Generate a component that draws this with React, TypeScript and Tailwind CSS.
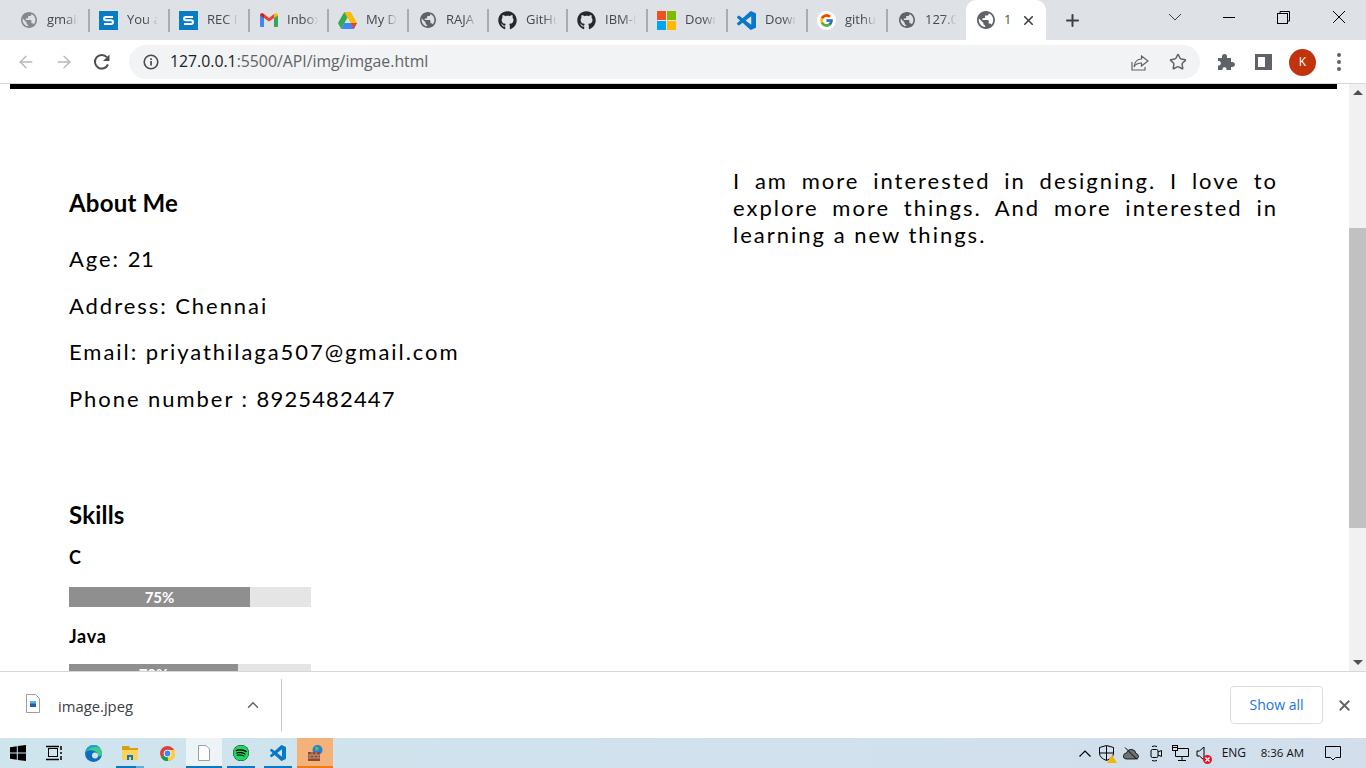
import { FaGithub, FaSpotify } from "react-icons/fa";
import { FcGoogle } from "react-icons/fc";
import { ArrowLeft, ArrowRight, Star, X, Plus, ChevronUp } from "lucide-react";
import type { ReactNode } from "react";

const Globe = ({ size = 16, color = "#5f6368" }: { size?: number; color?: string }) => (
  <svg width={size} height={size} viewBox="2 2 20 20" fill={color}>
    <path d="M12 2C6.48 2 2 6.48 2 12s4.48 10 10 10 10-4.48 10-10S17.52 2 12 2zm-1 17.93c-3.95-.49-7-3.85-7-7.93 0-.62.08-1.21.21-1.79L9 15v1c0 1.1.9 2 2 2v1.93zm6.9-2.54c-.26-.81-1-1.39-1.9-1.39h-1v-3c0-.55-.45-1-1-1H8v-2h2c.55 0 1-.45 1-1V7h2c1.1 0 2-.9 2-2v-.41c2.93 1.19 5 4.06 5 7.41 0 2.08-.8 3.97-2.1 5.39z" />
  </svg>
);
const SLogo = () => (
  <svg width="19" height="19" viewBox="0 0 19 19">
    <rect width="19" height="19" fill="#0a7cc4" />
    <path d="M14 6 H7 Q5 6 5 7.5 Q5 9.2 7 9.2 H12 Q14 9.2 14 11 Q14 13 12 13 H5" fill="none" stroke="#fff" strokeWidth="2" />
  </svg>
);
const Gmail = () => (
  <svg width="18" height="14" viewBox="0 0 18 14">
    <path d="M0 2 L4 4 V14 H1 Q0 14 0 13Z" fill="#4285f4" />
    <path d="M18 2 L14 4 V14 H17 Q18 14 18 13Z" fill="#34a853" />
    <path d="M4 5 L9 8.5 L14 5 V1 L9 5 L4 1Z" fill="#ea4335" />
    <path d="M0 2.5 Q0 0 2 0 L4 1 V5 Z" fill="#c5221f" />
    <path d="M18 2.5 Q18 0 16 0 L14 1 V5 Z" fill="#fbbc04" />
  </svg>
);
const Drive = () => (
  <svg width="19" height="17" viewBox="0 0 19 17">
    <path d="M6.3 0 H12.7 L19 11 H12.7Z" fill="#fbbc04" />
    <path d="M6.3 0 L0 11 L3.2 17 L9.5 5.6Z" fill="#34a853" />
    <path d="M3.2 17 H15.8 L19 11 H6.3Z" fill="#4285f4" />
    <path d="M15.8 17 L19 11 H12.7Z" fill="#ea4335" />
  </svg>
);
const Ms = () => (
  <svg width="19" height="19" viewBox="0 0 19 19">
    <rect width="9" height="9" fill="#f25022" />
    <rect x="10" width="9" height="9" fill="#7fba00" />
    <rect y="10" width="9" height="9" fill="#00a4ef" />
    <rect x="10" y="10" width="9" height="9" fill="#ffb900" />
  </svg>
);
const Vs = ({ size = 19 }: { size?: number }) => (
  <svg width={size} height={size} viewBox="0 0 24 24" fill="#0a78c8">
    <path d="M23.15 2.587L18.21.21a1.494 1.494 0 0 0-1.705.29l-9.46 8.63-4.12-3.128a.999.999 0 0 0-1.276.057L.327 7.261A1 1 0 0 0 .326 8.74L3.899 12 .326 15.26a1 1 0 0 0 .001 1.479L1.65 17.94a.999.999 0 0 0 1.276.057l4.12-3.128 9.46 8.63a1.492 1.492 0 0 0 1.704.29l4.942-2.377A1.5 1.5 0 0 0 24 20.06V3.939a1.5 1.5 0 0 0-.85-1.352zm-5.146 14.861L10.826 12l7.178-5.448v10.896z" />
  </svg>
);
const G = () => (
  <span className="flex h-[19px] w-[19px] items-center justify-center rounded-full bg-white">
    <FcGoogle size={15} />
  </span>
);
const Gh = () => <FaGithub size={19} color="#24292f" />;

const tabs = [
  { icon: <Globe color="#86888b" />, label: "gmail", w: "w-[80px]" },
  { icon: <SLogo />, label: "You a", w: "w-[80px]" },
  { icon: <SLogo />, label: "REC I", w: "w-[80px]" },
  { icon: <Gmail />, label: "Inbox", w: "w-[79px]" },
  { icon: <Drive />, label: "My D", w: "w-[80px]" },
  { icon: <Globe />, label: "RAJA", w: "w-[80px]" },
  { icon: <Gh />, label: "GitHu", w: "w-[79px]" },
  { icon: <Gh />, label: "IBM-I", w: "w-[80px]" },
  { icon: <Ms />, label: "Down", w: "w-[80px]" },
  { icon: <Vs />, label: "Down", w: "w-[80px]" },
  { icon: <G />, label: "githu", w: "w-[80px]" },
  { icon: <Globe />, label: "127.0", w: "w-[78px]" },
];

function TabStrip() {
  return (
    <div className="flex h-10 shrink-0 items-start bg-[#dee1e6] pl-[10px]">
      {tabs.map((t, i) => (
        <div key={i} className={`${t.w} relative flex h-10 shrink-0 items-center pl-[9px]`}>
          <span className="flex w-[19px] shrink-0 items-center justify-center">{t.icon}</span>
          <span className="ml-[9px] w-[33px] overflow-hidden whitespace-nowrap text-[13px] text-[#45494e] [mask-image:linear-gradient(to_right,black_55%,transparent_95%)]">
            {t.label}
          </span>
          {i < 11 && <span className="absolute right-0 top-[9px] h-[23px] w-[2px] bg-[#a9acb0]" />}
        </div>
      ))}
      <div className="flex h-10 w-[80px] shrink-0 items-center rounded-t-[10px] bg-white pl-[11px]">
        <Globe size={18} />
        <span className="ml-[9px] text-[13px] text-[#6b4a30]">1</span>
        <X size={15} strokeWidth={2.5} className="ml-[10px] text-[#3c4043]" />
      </div>
      <div className="flex h-10 w-[52px] items-center justify-center">
        <Plus size={19} strokeWidth={2.5} className="text-[#3c4043]" />
      </div>
      <div className="flex h-10 flex-1 items-start justify-end">
        <svg width="14" height="8" viewBox="0 0 14 8" fill="none" stroke="#3c4043" className="mr-[19px] mt-[13px]"><path d="M1 1 L7 7 L13 1" /></svg>
        <div className="flex w-[55px] justify-center pt-[17px]"><span className="h-px w-[12px] bg-black" /></div>
        <div className="flex w-[55px] justify-center pt-[11px]">
          <svg width="13" height="13" viewBox="0 0 13 13" fill="none" stroke="#000" strokeWidth="1">
            <rect x="0.5" y="2.5" width="10" height="10" />
            <path d="M3 2.5 V0.5 H12.5 V10 H10.5" />
          </svg>
        </div>
        <div className="flex w-[55px] justify-center pt-[10px]">
          <svg width="14" height="14" viewBox="0 0 14 14" stroke="#000" strokeWidth="1"><path d="M1 1 L13 13 M13 1 L1 13" /></svg>
        </div>
      </div>
    </div>
  );
}

function Toolbar() {
  return (
    <div className="flex h-[44px] shrink-0 items-center border-b border-[#d5d7da] bg-white pt-[1px]">
      <div className="flex w-[129px] items-center pl-[16px] text-[#b5b7ba]">
        <ArrowLeft size={20} strokeWidth={1.6} />
        <ArrowRight size={20} strokeWidth={1.6} className="ml-[18px]" />
        <svg width="18" height="18" viewBox="0 0 18 18" fill="none" className="ml-[19px]">
          <path d="M15 11.5 A6.8 6.8 0 1 1 13.8 4.2" stroke="#4a4d51" strokeWidth="2" />
          <path d="M16.5 1.5 V8 H10Z" fill="#4a4d51" />
        </svg>
      </div>
      <div className="flex h-[34px] w-[1071px] items-center rounded-full bg-[#f1f3f4] pl-[14px]">
        <svg width="16" height="16" viewBox="0 0 16 16" fill="none">
          <circle cx="8" cy="8" r="6.8" stroke="#4a4d51" strokeWidth="1.6" />
          <rect x="7.2" y="7" width="1.7" height="4.5" fill="#4a4d51" />
          <rect x="7.2" y="4.3" width="1.7" height="1.7" fill="#4a4d51" />
        </svg>
        <span className="ml-[11px] whitespace-nowrap text-[15.8px] text-[#5f6368]">
          <span className="text-[#202124]">127.0.0.1</span>:5500/API/img/imgae.html
        </span>
        <span className="ml-auto flex items-center pr-[13px]">
          <svg width="18" height="17" viewBox="0 0 18 17" fill="none" stroke="#5f6368" strokeWidth="1.2">
            <path d="M1 8 V16 H14 V13" />
            <path d="M10.5 2 L17 7 L10.5 12 V9 Q5 9 3 13 Q4 5 10.5 5Z" />
          </svg>
          <Star size={18} strokeWidth={2} className="ml-[20px] text-[#5f6368]" />
        </span>
      </div>
      <div className="flex flex-1 items-center">
        <svg width="18" height="18" viewBox="0 0 18 18" fill="#5f6368" className="ml-[17px]">
          <path d="M1 5 H5 V3.5 A2.5 2.5 0 0 1 10 3.5 V5 H14 V9 H15.5 A2.5 2.5 0 0 1 15.5 14 H14 V17 H9.5 V15.5 A2.2 2.2 0 0 0 5.5 15.5 V17 H1 V12.5 H2.5 A2.5 2.5 0 0 0 2.5 8 H1Z" />
        </svg>
        <span className="ml-[20px] flex h-[16px] w-[17px] justify-end border-[3px] border-[#5f6368] border-r-[7px]" />
        <span className="ml-[17px] flex h-[27px] w-[27px] items-center justify-center rounded-full bg-[#c2330b] text-[12px] text-white">K</span>
        <span className="ml-[21px] flex flex-col gap-[3px]">
          <i className="h-[4px] w-[4px] rounded-full bg-[#5f6368]" />
          <i className="h-[4px] w-[4px] rounded-full bg-[#5f6368]" />
          <i className="h-[4px] w-[4px] rounded-full bg-[#5f6368]" />
        </span>
      </div>
    </div>
  );
}

function Bar({ fill, label }: { fill: string; label: string }) {
  return (
    <div className="h-5 w-[242px] bg-[#e5e5e5]">
      <div className={`${fill} h-5 bg-[#8f8f90] text-center text-[15px] font-bold leading-5 text-white`}>{label}</div>
    </div>
  );
}

function Page() {
  return (
    <div className="flex min-h-0 flex-1 bg-white">
      <main className="min-w-0 flex-1 overflow-hidden pl-[10px] pr-[12px] font-['Lato',sans-serif] text-black">
        <div className="h-[5px] bg-black" />
        <div className="flex">
          <section className="w-[723px] shrink-0 pl-[59px] pt-[99px]">
            <h2 className="text-[24px] font-bold leading-[30px] tracking-[0.2px]">About Me</h2>
            <div className="mt-[28px] flex flex-col gap-[20px] text-[22px] leading-[26.7px] tracking-[1.95px]">
              <p>Age: <span className="tracking-[0.5px]">21</span></p>
              <p>Address: Chennai</p>
              <p>Email: priyathilaga507@gmail.com</p>
              <p>Phone number : <span className="tracking-[1.15px]">8925482447</span></p>
            </div>
            <h2 className="mt-[87px] text-[24px] font-bold leading-[30px] tracking-[0.2px]">Skills</h2>
            <p className="mt-[16px] text-[18px] font-bold leading-[22px] tracking-[0.7px]">C</p>
            <div className="mt-[19px]"><Bar fill="w-[181px]" label="75%" /></div>
            <p className="mt-[18px] text-[18px] font-bold leading-[22px] tracking-[0.7px]">Java</p>
            <div className="mt-[17px]"><Bar fill="w-[169px]" label="70%" /></div>
          </section>
          <section className="w-[545px] shrink-0 pt-[78px] text-justify text-[22px] leading-[27px] tracking-[2px]">
            I am more interested in designing. I love to explore more things. And more interested in learning a new things.
          </section>
        </div>
      </main>
      <aside className="flex w-[17px] shrink-0 flex-col bg-[#f1f1f1]">
        <div className="flex h-[17px] items-center justify-center">
          <span className="h-0 w-0 border-x-[5px] border-b-[5px] border-x-transparent border-b-[#505050]" />
        </div>
        <div className="mt-[127px] h-[300px] bg-[#c1c1c1]" />
        <div className="mt-auto flex h-[17px] items-center justify-center">
          <span className="h-0 w-0 border-x-[5px] border-t-[5px] border-x-transparent border-t-[#505050]" />
        </div>
      </aside>
    </div>
  );
}

function Downloads() {
  return (
    <div className="flex h-[67px] shrink-0 items-center border-t border-[#d5d7da] bg-white">
      <div className="flex h-[52px] w-[282px] items-center border-r border-[#c4c6c8] pl-[26px]">
        <svg width="14" height="19" viewBox="0 0 14 19" className="mb-[4px]">
          <path d="M0.5 0.5 H9.5 L13.5 4.5 V18.5 H0.5Z" fill="#fff" stroke="#9aa0a6" />
          <rect x="4" y="7" width="6" height="6" fill="#1a5fb4" />
          <rect x="4" y="7" width="6" height="2.5" fill="#5db3ee" />
        </svg>
        <span className="ml-[18px] pt-[2px] text-[14.8px] text-[#3c4043]">image.jpeg</span>
        <ChevronUp size={18} strokeWidth={2} className="ml-auto mr-[19px] text-[#5f6368]" />
      </div>
      <div className="ml-auto flex h-[38px] w-[93px] items-center justify-center rounded-[4px] border border-[#dadce0] pb-[2px] text-[14px] text-[#1a73e8]">
        Show all
      </div>
      <X size={17} strokeWidth={2.5} className="ml-[13px] mr-[13px] text-[#5f6368]" />
    </div>
  );
}

function TaskSlot({ w, ml, line, bg, children }: { w: string; ml: string; line?: string; bg?: string; children: ReactNode }) {
  return (
    <div className={`${w} ${ml} ${bg ?? ""} relative flex h-[30px] shrink-0 items-center justify-center`}>
      {children}
      {line && <span className={`${line} absolute bottom-0 left-0 right-0 h-[2px]`} />}
    </div>
  );
}

function Taskbar() {
  return (
    <div className="flex h-[30px] shrink-0 items-center bg-gradient-to-r from-[#cfe5ee] to-[#d2deec]">
      <TaskSlot w="w-[36px]" ml="ml-0">
        <svg width="16" height="16" viewBox="0 0 16 16" fill="#000"><path d="M0 2.2 L6.8 1.2 V7.5 H0Z M7.8 1 L16 0 V7.5 H7.8Z M0 8.5 H6.8 V14.8 L0 13.8Z M7.8 8.5 H16 V16 L7.8 15Z" /></svg>
      </TaskSlot>
      <TaskSlot w="w-[36px]" ml="ml-0">
        <svg width="17" height="16" viewBox="0 0 17 16" fill="none" stroke="#000"><rect x="2.5" y="3.5" width="9" height="8" /><path d="M0 1.5 H13 M0 14.5 H13 M15 1 V5 M15 7 V9 M15 11 V15" strokeWidth="1.5" /></svg>
      </TaskSlot>
      <TaskSlot w="w-[36px]" ml="ml-[3px]">
        <svg width="17" height="17" viewBox="0 0 17 17">
          <circle cx="8.5" cy="8.5" r="8.5" fill="#0f6cbd" />
          <path d="M0.5 7 Q3 0 9 0 Q16 0.5 17 8 Q17 11.5 12.5 11.5 Q13.5 8 10.5 6.5 Q4 4 0.5 7Z" fill="#3fcb8c" />
          <path d="M0.5 7 Q3 0 9 0 Q13 0.2 15 3 Q9 1 5 3.5 Q2 5 0.5 7Z" fill="#1c9fd8" />
          <circle cx="10" cy="10.5" r="3" fill="#d0e5ee" />
        </svg>
      </TaskSlot>
      <div className="ml-[5px] w-[28px]">
        <TaskSlot w="w-[28px]" ml="ml-0">
          <svg width="16" height="14" viewBox="0 0 16 14">
            <path d="M0 0 H7 L8 2 H16 V14 H0Z" fill="#d9a016" />
            <rect y="4" width="16" height="10" fill="#fbd25a" />
            <path d="M5 14 V9 H11 V14 H9 V11 H7 V14Z" fill="#0a78c8" />
          </svg>
          <span className="absolute bottom-0 left-0 h-[2px] w-[20px] bg-[#0a78c8]" />
          <span className="absolute bottom-0 right-0 h-[2px] w-[8px] bg-[#65a9e0]" />
        </TaskSlot>
      </div>
      <TaskSlot w="w-[28px]" ml="ml-[9px]">
        <svg width="15" height="15" viewBox="0 0 15 15">
          <circle cx="7.5" cy="7.5" r="7.5" fill="#db4437" />
          <path d="M1 11 A7.5 7.5 0 0 0 8 15 L11 8Z" fill="#0f9d58" />
          <path d="M7.5 4 H14.6 A7.5 7.5 0 0 1 8 15Z" fill="#ffcd40" />
          <circle cx="7.5" cy="7.5" r="3.8" fill="#fff" />
          <circle cx="7.5" cy="7.5" r="2.9" fill="#4285f4" />
        </svg>
      </TaskSlot>
      <TaskSlot w="w-[36px]" ml="ml-[5px]" bg="bg-[#ecf4f8]" line="bg-[#0a78c8]">
        <svg width="12" height="16" viewBox="0 0 12 16"><path d="M0.5 0.5 H8 L11.5 4 V15.5 H0.5Z" fill="#fff" stroke="#9aa0a6" /></svg>
      </TaskSlot>
      <TaskSlot w="w-[28px]" ml="ml-[5px]" line="bg-[#0a78c8]">
        <FaSpotify size={16} color="#1ed760" className="rounded-full bg-black" />
      </TaskSlot>
      <TaskSlot w="w-[28px]" ml="ml-[9px]" line="bg-[#0a78c8]">
        <Vs size={16} />
      </TaskSlot>
      <TaskSlot w="w-[36px]" ml="ml-[5px]" bg="bg-[#f4b27a]" line="bg-[#f07a14]">
        <svg width="16" height="16" viewBox="0 0 16 16">
          <circle cx="10.5" cy="5" r="5" fill="#2d7fd3" />
          <path d="M8 2 Q11 1 12 4 L9 6Z" fill="#5cc25c" />
          <rect x="1" y="7" width="12" height="9" fill="#8c4a32" />
          <path d="M1 10 H13 M1 13 H13 M5 7 V10 M9 7 V10 M3 10 V13 M7 10 V13 M11 10 V13" stroke="#d8b09a" strokeWidth="0.7" />
        </svg>
      </TaskSlot>
      <div className="ml-auto flex h-[30px] items-center text-[#111]">
        <svg width="12" height="7" viewBox="0 0 12 7" fill="none" stroke="#000" strokeWidth="1.2"><path d="M0.5 6.5 L6 1 L11.5 6.5" /></svg>
        <span className="relative ml-[8px] flex w-[16px] justify-center">
          <svg width="15" height="16" viewBox="0 0 15 16" fill="none" stroke="#000"><path d="M7.5 0.5 L14.5 2.5 V8 Q14.5 13 7.5 15.5 Q0.5 13 0.5 8 V2.5Z M7.5 1 V15 M1 8 H14" /></svg>
          <span className="absolute -bottom-[2px] -right-[2px] h-0 w-0 border-x-[5px] border-b-[8px] border-x-transparent border-b-[#f5b800]" />
        </span>
        <svg width="16" height="13" viewBox="0 0 16 13" className="ml-[8px]"><path d="M4 12 Q0 12 0.5 8.5 Q1 6 3.5 6 Q5 2 9 2.5 Q12.5 3 13 6.5 Q15.5 7 15.5 9.5 Q15.5 12 12 12Z" fill="#6e7274" stroke="#000" strokeWidth="0.8" /><path d="M2 0.5 L14 12.5" stroke="#000" /></svg>
        <svg width="12" height="17" viewBox="0 0 12 17" fill="none" stroke="#000" className="ml-[11px]"><rect x="1" y="4.5" width="7" height="8" rx="1.5" /><path d="M8 7 L11.5 5.5 V11.5 L8 10 M2 1.5 Q4.5 0.5 7 1.5 M2 15.5 Q4.5 16.5 7 15.5" /></svg>
        <svg width="17" height="16" viewBox="0 0 17 16" fill="none" stroke="#000" className="ml-[10px]"><path d="M3.5 3.5 H16.5 V11.5 H3.5 V5 M10 11.5 V15 M6 15.5 H14" /><rect x="0.5" y="0.5" width="5" height="5" fill="#d2deec" /><path d="M0.5 2.5 H5.5" /></svg>
        <span className="relative ml-[7px] flex w-[18px]">
          <svg width="10" height="15" viewBox="0 0 10 15" fill="none" stroke="#000"><path d="M1 5 H3.5 L8 1 V14 L3.5 10 H1Z" /></svg>
          <span className="absolute -bottom-[3px] left-[7px] flex h-[9px] w-[9px] items-center justify-center rounded-full bg-[#e81123]">
            <X size={7} strokeWidth={4} className="text-white" />
          </span>
        </span>
        <span className="ml-[8px] w-[24px] text-[12px]">ENG</span>
        <span className="ml-[15px] whitespace-nowrap text-[11.5px]">8:36 AM</span>
        <svg width="16" height="15" viewBox="0 0 16 15" fill="none" stroke="#000" className="ml-[21px] mr-[25px]"><path d="M0.5 0.5 H15.5 V11.5 H10.5 L8 14 L5.5 11.5 H0.5Z" /></svg>
      </div>
    </div>
  );
}

export default function App() {
  return (
    <div className="flex h-[768px] w-[1366px] flex-col overflow-hidden bg-white font-['Open_Sans',sans-serif]">
      <TabStrip />
      <Toolbar />
      <Page />
      <Downloads />
      <Taskbar />
    </div>
  );
}
